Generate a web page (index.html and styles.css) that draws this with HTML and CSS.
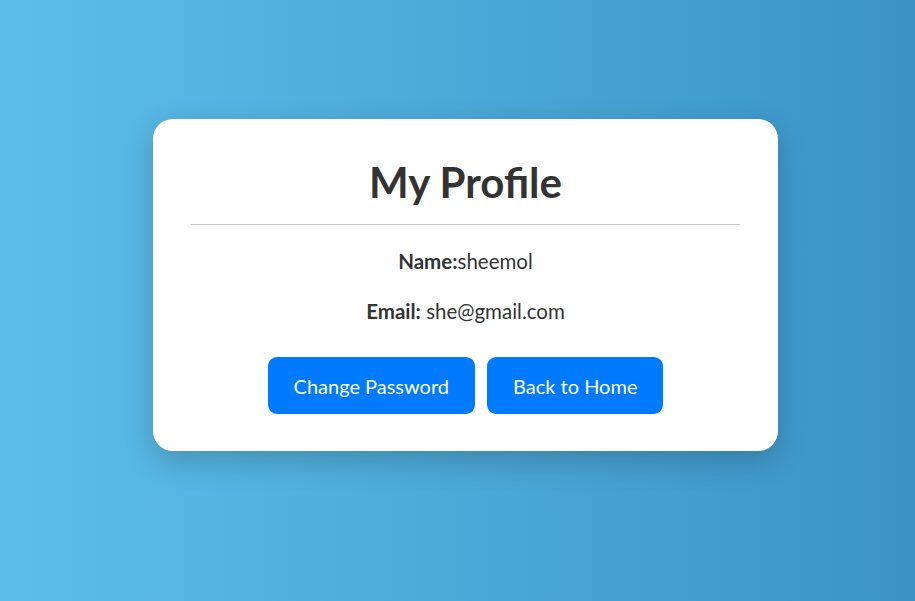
FILE: index.html
```html
<!DOCTYPE html>
<html lang="en">
<head>
<meta charset="utf-8">
<title>My Profile</title>
<link rel="stylesheet" href="styles.css">
</head>
<body>
<main class="page">
  <section class="card">
    <h1 class="title">My Profile</h1>
    <hr class="divider">
    <p class="field field-name"><strong>Name:</strong>sheemol</p>
    <p class="field field-email"><strong>Email:</strong> she@gmail.com</p>
    <div class="actions">
      <button class="btn" type="button">Change Password</button>
      <button class="btn" type="button">Back to Home</button>
    </div>
  </section>
</main>
</body>
</html>
```
FILE: styles.css
```css
html, body {
  margin: 0;
  padding: 0;
  height: 100%;
}
body {
  font-family: Lato, "Open Sans", sans-serif;
  color: #333;
  background: linear-gradient(to right, #5dbee9, #3b93c7);
}
.page {
  display: flex;
  justify-content: center;
  padding-top: 119px;
  padding-left: 16px;
}
.card {
  box-sizing: border-box;
  width: 625px;
  height: 332px;
  background: #fff;
  border-radius: 20px;
  padding: 38px 38px;
  box-shadow: 0 10px 30px rgba(0, 0, 0, 0.2);
  display: flex;
  flex-direction: column;
  align-items: stretch;
  text-align: center;
}
.title {
  margin: 0 0 17px;
  font-size: 42px;
  line-height: 50px;
  font-weight: 700;
}
.divider {
  margin: 0;
  border: 0;
  border-top: 1px solid #ccc;
}
.field {
  margin: 0;
  font-size: 20.5px;
  line-height: 24px;
}
.field-name { margin-top: 24px; }
.field-email { margin-top: 26px; }
.actions {
  margin-top: 34px;
  display: flex;
  justify-content: center;
  gap: 12px;
}
.btn {
  height: 57px;
  padding: 0 26px;
  border: 0;
  border-radius: 9px;
  background: #007bff;
  color: #fff;
  font-family: inherit;
  font-size: 20px;
  cursor: pointer;
}
```
